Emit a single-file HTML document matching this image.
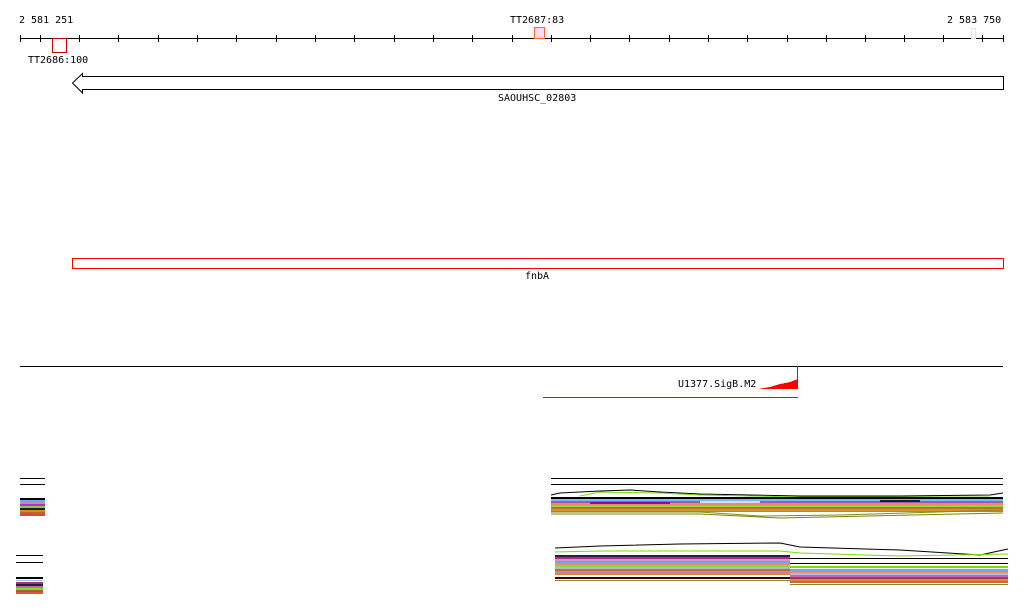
<!DOCTYPE html>
<html><head><meta charset="utf-8"><style>
html,body{margin:0;padding:0;background:#fff;width:1024px;height:611px;overflow:hidden}
svg{display:block}
text{font-family:"DejaVu Sans Mono","Liberation Mono",monospace;font-size:10px;fill:#000}
</style></head><body>
<svg width="1024" height="611" viewBox="0 0 1024 611" xmlns="http://www.w3.org/2000/svg" shape-rendering="crispEdges">
<text x="19" y="23">2 581 251</text>
<text x="510" y="23">TT2687:83</text>
<text x="947" y="23">2 583 750</text>
<line x1="20" y1="38.5" x2="1003" y2="38.5" stroke="#000"/>
<g stroke="#000">
<line x1="20.5" y1="35" x2="20.5" y2="42"/>
<line x1="1003.5" y1="35" x2="1003.5" y2="42"/>
<line x1="40.5" y1="35" x2="40.5" y2="42"/><line x1="79.5" y1="35" x2="79.5" y2="42"/><line x1="118.5" y1="35" x2="118.5" y2="42"/><line x1="158.5" y1="35" x2="158.5" y2="42"/><line x1="197.5" y1="35" x2="197.5" y2="42"/><line x1="236.5" y1="35" x2="236.5" y2="42"/><line x1="276.5" y1="35" x2="276.5" y2="42"/><line x1="315.5" y1="35" x2="315.5" y2="42"/><line x1="354.5" y1="35" x2="354.5" y2="42"/><line x1="394.5" y1="35" x2="394.5" y2="42"/><line x1="433.5" y1="35" x2="433.5" y2="42"/><line x1="472.5" y1="35" x2="472.5" y2="42"/><line x1="512.5" y1="35" x2="512.5" y2="42"/><line x1="551.5" y1="35" x2="551.5" y2="42"/><line x1="590.5" y1="35" x2="590.5" y2="42"/><line x1="629.5" y1="35" x2="629.5" y2="42"/><line x1="669.5" y1="35" x2="669.5" y2="42"/><line x1="708.5" y1="35" x2="708.5" y2="42"/><line x1="747.5" y1="35" x2="747.5" y2="42"/><line x1="787.5" y1="35" x2="787.5" y2="42"/><line x1="826.5" y1="35" x2="826.5" y2="42"/><line x1="865.5" y1="35" x2="865.5" y2="42"/><line x1="904.5" y1="35" x2="904.5" y2="42"/><line x1="943.5" y1="35" x2="943.5" y2="42"/><line x1="982.5" y1="35" x2="982.5" y2="42"/>
</g>
<rect x="52.5" y="38.5" width="14" height="14" fill="none" stroke="#c00"/>
<rect x="534.5" y="27.5" width="10" height="11" fill="#fde" stroke="#f63"/>
<rect x="971.5" y="28.5" width="4" height="10" fill="none" stroke="#fdc"/>
<text x="28" y="63">TT2686:100</text>
<polygon points="72.5,83 82.5,73.5 82.5,76.5 1003.5,76.5 1003.5,89.5 82.5,89.5 82.5,93" fill="#fff" stroke="#000" shape-rendering="auto"/>
<text x="498" y="101">SAOUHSC_02803</text>
<rect x="72.5" y="258.5" width="931" height="10" fill="none" stroke="#f00"/>
<text x="525" y="279">fnbA</text>
<line x1="20" y1="366.5" x2="1003" y2="366.5" stroke="#000"/>
<line x1="797.5" y1="366" x2="797.5" y2="389" stroke="#f00"/>
<polygon points="758,389 770,387 780,384 790,382 798,379 798,389" fill="#f00"/>
<text x="678" y="387">U1377.SigB.M2</text>
<line x1="543" y1="397.5" x2="798" y2="397.5" stroke="#f00"/>
<!-- left small tracks -->
<g>
<rect x="20" y="478" width="25" height="1" fill="#000"/>
<rect x="20" y="484" width="25" height="1" fill="#000"/>
<rect x="20" y="498" width="25" height="2" fill="#000"/>
<rect x="20" y="500" width="25" height="2" fill="#6af"/>
<rect x="20" y="502" width="25" height="2" fill="#c8a"/>
<rect x="20" y="504" width="25" height="2" fill="#a3c"/>
<rect x="20" y="506" width="25" height="2" fill="#8c4"/>
<rect x="20" y="508" width="25" height="2" fill="#123"/>
<rect x="20" y="510" width="25" height="2" fill="#d80"/>
<rect x="20" y="512" width="25" height="2" fill="#b62"/>
<rect x="20" y="514" width="25" height="2" fill="#d44"/>
<rect x="16" y="555" width="27" height="1" fill="#000"/>
<rect x="16" y="562" width="27" height="1" fill="#000"/>
<rect x="16" y="577" width="27" height="2" fill="#000"/>
<rect x="16" y="580" width="27" height="1" fill="#9bf"/>
<rect x="16" y="582" width="27" height="2" fill="#a36"/>
<rect x="16" y="584" width="27" height="2" fill="#224"/>
<rect x="16" y="586" width="27" height="2" fill="#c6a"/>
<rect x="16" y="588" width="27" height="2" fill="#6e2"/>
<rect x="16" y="590" width="27" height="2" fill="#b53"/>
<rect x="16" y="592" width="27" height="2" fill="#d54"/>
</g>
<!-- right top band -->
<rect x="551" y="478" width="452" height="1" fill="#000"/>
<rect x="551" y="484" width="452" height="1" fill="#000"/>
<polyline points="551,495 560,493 600,491 630,490 660,492 700,494 800,496 900,496 990,495 1003,493" fill="none" stroke="#000" shape-rendering="auto"/>
<polyline points="580,496 600,492 660,493 700,495 800,497 990,497" fill="none" stroke="#7d0" shape-rendering="auto"/>
<rect x="551" y="497" width="452" height="2" fill="#000"/>
<rect x="551" y="499" width="452" height="2" fill="#7bf"/>
<rect x="551" y="501" width="452" height="2" fill="#a5a"/>
<rect x="551" y="503" width="452" height="2" fill="#e86"/>
<rect x="551" y="505" width="452" height="2" fill="#8d3"/>
<rect x="551" y="507" width="452" height="2" fill="#c63"/>
<rect x="551" y="509" width="452" height="2" fill="#c92"/>
<rect x="551" y="511" width="452" height="1" fill="#e64"/>
<polyline points="551,512 700,512 760,516 840,515 1003,510" fill="none" stroke="#882" shape-rendering="auto"/>
<polyline points="551,514 700,514 780,518 1003,513" fill="none" stroke="#780" shape-rendering="auto"/>
<rect x="590" y="502" width="80" height="2" fill="#819"/>
<rect x="700" y="501" width="60" height="2" fill="#ddd"/>
<rect x="880" y="500" width="40" height="2" fill="#123"/>
<!-- right bottom band -->
<polyline points="555,548 600,546 680,544 780,543 800,547 900,550 980,555 1008,549" fill="none" stroke="#000" shape-rendering="auto"/>
<polyline points="555,552 600,551 780,551 800,553 900,556 1008,554" fill="none" stroke="#7d0" shape-rendering="auto"/>
<rect x="555" y="555" width="235" height="2" fill="#224"/>
<rect x="555" y="557" width="235" height="2" fill="#b28"/>
<rect x="555" y="559" width="235" height="2" fill="#c9c"/>
<rect x="555" y="561" width="235" height="2" fill="#6ae"/>
<rect x="555" y="563" width="235" height="2" fill="#e86"/>
<rect x="555" y="565" width="235" height="2" fill="#8d3"/>
<rect x="555" y="567" width="235" height="2" fill="#abd"/>
<rect x="555" y="569" width="235" height="2" fill="#c63"/>
<rect x="555" y="571" width="235" height="2" fill="#b8a"/>
<rect x="555" y="573" width="235" height="2" fill="#d83"/>
<rect x="555" y="577" width="235" height="2" fill="#301"/>
<rect x="555" y="580" width="235" height="1" fill="#882"/>
<rect x="790" y="558" width="218" height="1" fill="#000"/>
<rect x="790" y="563" width="218" height="1" fill="#000"/>
<rect x="790" y="566" width="218" height="2" fill="#7d0"/>
<rect x="790" y="569" width="218" height="2" fill="#6ae"/>
<rect x="790" y="571" width="218" height="2" fill="#e86"/>
<rect x="790" y="573" width="218" height="2" fill="#abd"/>
<rect x="790" y="575" width="218" height="2" fill="#c6a"/>
<rect x="790" y="577" width="218" height="2" fill="#a36"/>
<rect x="790" y="579" width="218" height="2" fill="#d83"/>
<rect x="790" y="581" width="218" height="2" fill="#c63"/>
<rect x="790" y="584" width="218" height="1" fill="#882"/>
</svg>
</body></html>
